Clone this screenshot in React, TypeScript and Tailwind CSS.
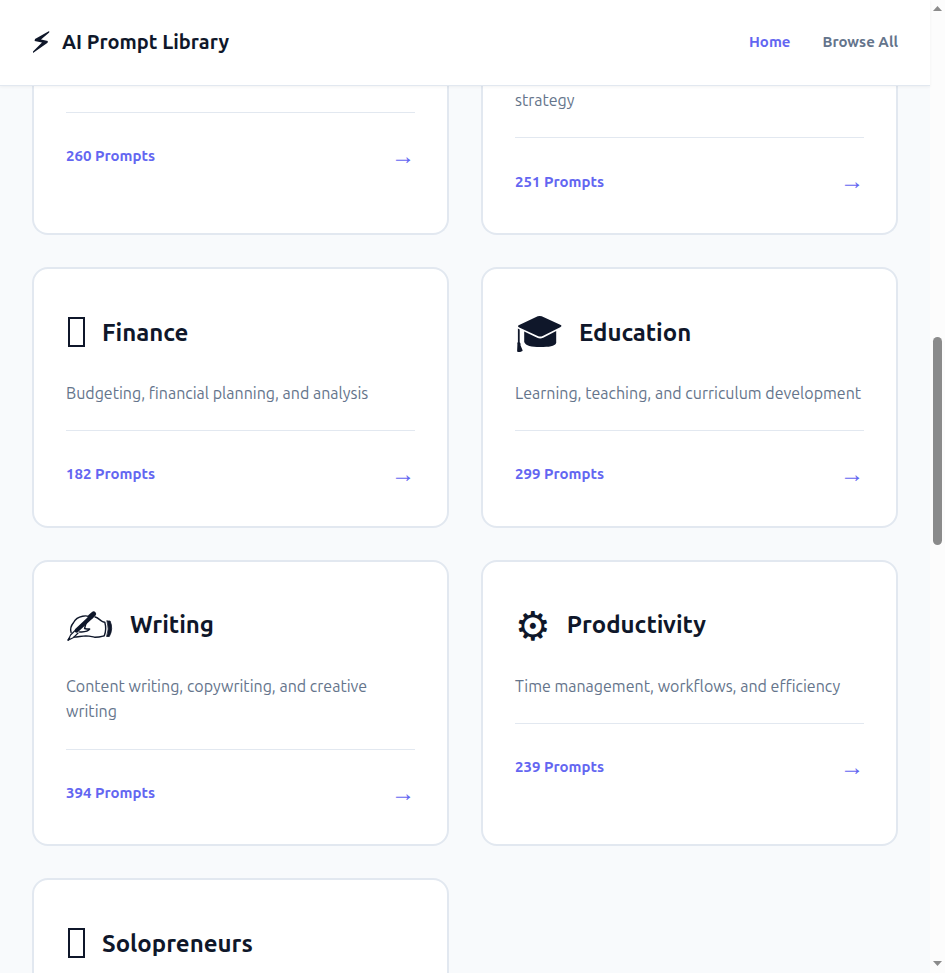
import type { ReactNode } from "react";

function Missing() {
  return <span className="-mt-0.5 mr-px ml-0.5 block h-[30px] w-[17px] border-2 border-[#0f172a]" />;
}

function Bolt() {
  return (
    <svg className="mr-3 block h-[23px] w-[18px]" viewBox="0 0 18 23" fill="#0f172a">
      <path d="M17.200 0L3 8L2.600 10L10 11.600L1 20.500V22L15.600 11.800L15.800 9.900L9 8.600L17.200 1.400z" />
    </svg>
  );
}

function Cap() {
  return (
    <svg className="block h-10 w-12" viewBox="-0.700 0 48 40" fill="#0f172a">
      <path d="M22 3.300q2-.8 4 0l18.500 8.500q2.500 1.200 0 2.400L27 23q-2.500 1.200-5 0L3.500 14.500q-2.500-1.200 0-2.400z" />
      <path d="M8.500 18.500l13 6.200q3 1.400 6 0L40.500 18v12c-1.500 3.500-7 4-16 4S10 33 8.500 29z" />
      <path d="M2.200 15.500l1.800 1v12.700c1 .8 1 2 .8 3l2.200 5.300c-1 1.500-4 2-5.600 1l.3-7c-.2-1.400 0-2 .5-2.600z" />
    </svg>
  );
}

function Hand() {
  return (
    <svg className="block h-10 w-12" viewBox="0.400 0.500 48 40" fill="none" stroke="#0f172a" strokeLinecap="round" strokeLinejoin="round">
      <path d="M5.500 27c-1.300-4 0-7 2.500-10 2-4 5-5.500 9-6.300q4-.8 6 .3M29.500 11.500c3 .5 5 3.500 7.500 4.600q1 .5 2.200.6 2 7-.5 13.500c-3 .8-5 1.600-9.500 1.500-4-.8-6-1.300-9-1.300-4 .2-8 1-12 1.200" strokeWidth="1.400" />
      <path d="M20.500 17.500c-.8 2-1 4-1.500 5.500 1.500.6 3.500.6 5 .6-2 3-6 2.600-10 2.900" strokeWidth="1.500" />
      <path d="M28 8.500l-3.500 3" strokeWidth="5" />
      <path d="M26 11L11 25" strokeWidth="4.200" />
      <path d="M9 25.500l-4 4-2.500 5.300 5.500-2.800 4.500-4.500" strokeWidth="1.100" />
      <path d="M2.500 34.500l1.500-2" strokeWidth="1.500" />
      <path d="M41.500 15.500h3q3.500 8-.8 15.500h-2.700q3-7 .5-15.500z" fill="#0f172a" strokeWidth="0.800" />
    </svg>
  );
}

function Gear() {
  return <span className="font-['DejaVu_Sans'] text-[40px] leading-[64px] text-[#0f172a]">{"\u2699\uFE0E"}</span>;
}

function Footer({ count }: { count: number }) {
  return (
    <div className="mt-6 flex items-center justify-between border-t border-[#e2e8f0] pt-6 text-[#6366f1]">
      <span className="text-[15px] leading-6 font-semibold">{count} Prompts</span>
      <span className="text-2xl leading-[38.4px]">→</span>
    </div>
  );
}

type CardProps = { title: string; text?: string; count?: number; icon: ReactNode };

function Card({ title, text, count, icon }: CardProps) {
  return (
    <article className="rounded-2xl border-2 border-[#e2e8f0] bg-white p-8">
      <div className="mb-4 flex h-[63.9px] items-center gap-4">
        {icon}
        <h2 className="text-2xl leading-[38.4px] font-semibold text-[#0f172a]">{title}</h2>
      </div>
      {text && <p className="text-base leading-[25.6px] text-[#64748b]">{text}</p>}
      {count && <Footer count={count} />}
    </article>
  );
}

const cards: CardProps[] = [
  { title: "Finance", text: "Budgeting, financial planning, and analysis", count: 182, icon: <Missing /> },
  { title: "Education", text: "Learning, teaching, and curriculum development", count: 299, icon: <Cap /> },
  { title: "Writing", text: "Content writing, copywriting, and creative writing", count: 394, icon: <Hand /> },
  { title: "Productivity", text: "Time management, workflows, and efficiency", count: 239, icon: <Gear /> },
  { title: "Solopreneurs", icon: <Missing /> },
];

export default function App() {
  return (
    <div className="flex h-[973px] w-[945px] overflow-hidden bg-[#f8fafc] font-['Ubuntu','Noto_Sans',sans-serif]">
      <div className="flex min-w-0 flex-1 flex-col">
        <header className="relative z-10 flex h-[86px] shrink-0 items-center justify-between border-b border-[#e2e8f0] bg-white px-8 shadow-[0_1px_3px_rgba(0,0,0,0.05)]">
          <div className="flex items-center text-xl font-semibold text-[#0f172a]">
            <Bolt />
            <span className="pb-0.5">AI Prompt Library</span>
          </div>
          <nav className="flex gap-8 text-[15px] font-semibold text-[#64748b]">
            <a className="text-[#6366f1]">Home</a>
            <a>Browse All</a>
          </nav>
        </header>
        <main className="min-h-0 flex-1 overflow-hidden px-8">
          <div className="mb-8 grid grid-cols-2 gap-x-8">
            <article className="h-[148.8px] rounded-b-2xl border-2 border-t-0 border-[#e2e8f0] bg-white px-8 pt-[1.8px]">
              <Footer count={260} />
            </article>
            <article className="h-[148.8px] rounded-b-2xl border-2 border-t-0 border-[#e2e8f0] bg-white px-8 pt-[1.8px]">
              <p className="text-base leading-[25.6px] text-[#64748b]">strategy</p>
              <Footer count={251} />
            </article>
          </div>
          <div className="grid grid-cols-2 gap-8">
            {cards.map((card) => (
              <Card key={card.title} {...card} />
            ))}
          </div>
        </main>
      </div>
      <div className="flex w-[15px] shrink-0 flex-col items-center bg-[#fcfcfc]">
        <svg className="mt-1.5 h-[5px] w-[9px]" viewBox="0 0 9 5" fill="#8b8b8b"><path d="M0 5L4.500 0L9 5z" /></svg>
        <div className="mt-[326px] h-[208px] w-[9px] rounded-full bg-[#8b8b8b]" />
        <svg className="mt-auto mb-[7px] h-[5px] w-[9px]" viewBox="0 0 9 5" fill="#8b8b8b"><path d="M0 0L4.500 5L9 0z" /></svg>
      </div>
    </div>
  );
}
